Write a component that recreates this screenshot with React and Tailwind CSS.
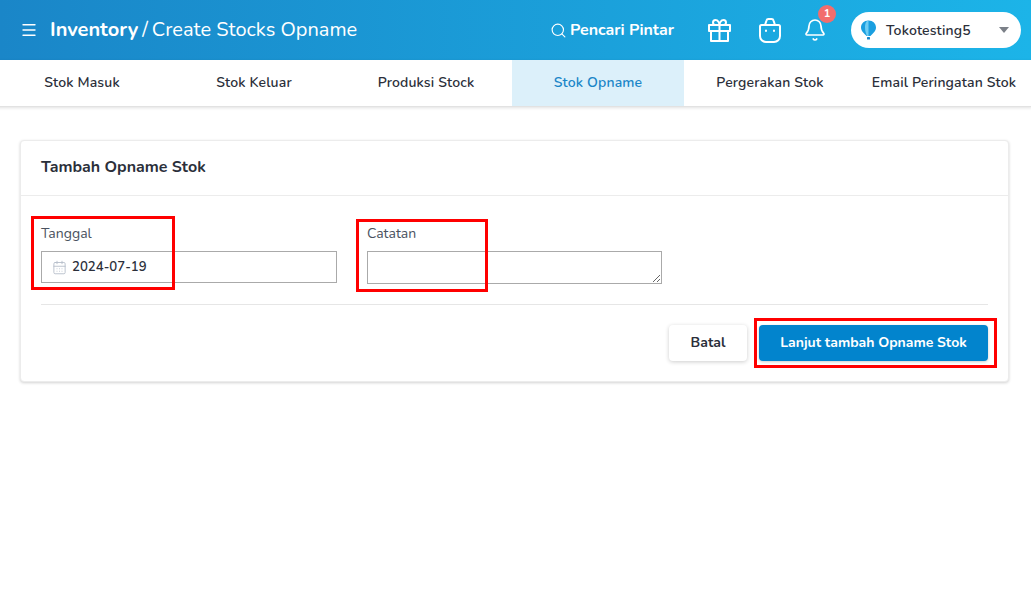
import React from 'react';
import { Menu, Search, Bell, CalendarDays } from 'lucide-react';

const tabs = ['Stok Masuk', 'Stok Keluar', 'Produksi Stock', 'Stok Opname', 'Pergerakan Stok'];

function GiftIcon() {
  return (
    <svg width="23" height="23" viewBox="0 0 23 23" fill="none" stroke="white" strokeWidth="2" strokeLinecap="round" strokeLinejoin="round">
      <rect x="1" y="6" width="21" height="6" />
      <path d="M3 12v10h17V12" />
      <path d="M11.500 6v16" />
      <path d="M11.500 6H7.500a2.500 2.500 0 0 1 0-5c2.500 0 4 3 4 5z" />
      <path d="M11.500 6h4a2.500 2.500 0 0 0 0-5c-2.500 0-4 3-4 5z" />
    </svg>
  );
}

function Bag() {
  return (
    <svg width="24" height="26" viewBox="0 0 24 26" fill="none" stroke="white" strokeWidth="2" strokeLinecap="round" strokeLinejoin="round">
      <path d="M3.500 8h17a1.500 1.500 0 0 1 1.500 1.500V19a6 6 0 0 1-6 6H8a6 6 0 0 1-6-6V9.500A1.500 1.500 0 0 1 3.500 8z" />
      <path d="M7 8l1.500-4.500A2 2 0 0 1 10.400 2h3.200a2 2 0 0 1 1.900 1.500L17 8" />
      <path d="M8 13.500v.5M16 13.500v.5" />
    </svg>
  );
}

function Balloon() {
  return (
    <svg width="17" height="20" viewBox="0 0 17 20">
      <path d="M8.500 0.500C4 0.500 1 3.800 1 7.500c0 3.800 4 6.800 5.500 8.500h4c1.500-1.700 5.500-4.700 5.500-8.500 0-3.700-3-7-7.500-7z" fill="#1a9fe0" />
      <path d="M8.500 0.500C6.200 0.500 5 3.800 5 7.500c0 3.800 1.300 6.800 2 8.500h1.500z" fill="#6fcdf3" />
      <rect x="7" y="17" width="3" height="2.500" rx="0.500" fill="#1a86c8" />
    </svg>
  );
}

export default function App() {
  return (
    <div className="relative min-h-[604px] overflow-hidden bg-white font-['Nunito','Lato','Noto_Sans',sans-serif] text-[#2b2f3a]">
      <header className="flex h-[60px] items-center bg-gradient-to-r from-[#1a86c8] to-[#1cb4e8] pl-[20px] pr-[10px] text-white">
        <Menu size={18} strokeWidth={1.8} />
        <div className="ml-[12px] flex items-center text-[20px]">
          <span className="font-bold">Inventory</span>
          <span className="mx-[4px]">/</span>
          <span>Create Stocks Opname</span>
        </div>
        <div className="ml-auto flex items-center">
          <Search size={17} strokeWidth={1.6} />
          <span className="ml-[3px] text-[16px] font-bold">Pencari Pintar</span>
          <div className="ml-[34px] flex"><GiftIcon /></div>
          <div className="ml-[27px] flex"><Bag /></div>
          <div className="relative ml-[21px] flex">
            <Bell size={24} strokeWidth={1.7} />
            <span className="absolute -right-[9px] -top-[13px] flex h-[18px] w-[18px] items-center justify-center rounded-full bg-[#f26d6d] text-[11px] font-bold">1</span>
          </div>
          <div className="ml-[24px] flex h-[36px] w-[170px] items-center rounded-full bg-white pl-[9px] pr-[12px] text-[#2b2f3a]">
            <Balloon />
            <span className="ml-[9px] text-[14px] font-semibold tracking-[0.15px]">Tokotesting5</span>
            <span className="ml-auto h-0 w-0 border-x-[5px] border-t-[6px] border-x-transparent border-t-[#7b8088]" />
          </div>
        </div>
      </header>

      <nav className="-ml-[4px] flex h-[47px] w-[1036px] border-b border-[#e2e2e2] bg-white shadow-[0_1px_3px_rgba(0,0,0,0.12)]">
        {tabs.map((t) => (
          <div
            key={t}
            className={t === 'Stok Opname'
              ? 'flex w-[172px] shrink-0 items-center justify-center whitespace-nowrap bg-[#dcf0fa] pb-[1px] text-[14px] font-semibold tracking-[0.15px] text-[#1a86c8]'
              : 'flex w-[172px] shrink-0 items-center justify-center whitespace-nowrap pb-[1px] text-[14px] font-semibold tracking-[0.15px]'}
          >
            {t}
          </div>
        ))}
        <div className="flex flex-1 items-center justify-center whitespace-nowrap pb-[1px] text-[14px] font-semibold tracking-[0.15px]">Email Peringatan Stok</div>
      </nav>

      <main className="pl-[20px] pr-[22px] pt-[33px]">
        <section className="h-[242px] rounded-[4px] border border-[#ececec] bg-white shadow-[0_1px_3px_rgba(0,0,0,0.18)]">
          <div className="flex h-[55px] items-center border-b border-[#ececec] px-[20px] pb-[2px]">
            <h2 className="text-[16px] font-bold">Tambah Opname Stok</h2>
          </div>
          <div className="px-[20px]">
            <div className="flex gap-[30px] pt-[28px]">
              <div className="w-[296px]">
                <label className="block text-[14px] leading-[19px] text-[#4a5260]">Tanggal</label>
                <div className="mt-[8px] flex h-[32px] items-center border border-[#aaaaaa] pl-[10px] pt-[1px]">
                  <CalendarDays size={15} strokeWidth={1.4} className="text-[#b4bcc8]" />
                  <span className="ml-[5px] text-[13.200px] font-semibold">2024-07-19</span>
                </div>
              </div>
              <div className="w-[295px]">
                <label className="block text-[14px] leading-[19px] text-[#4a5260]">Catatan</label>
                <textarea className="mt-[8px] block h-[33px] w-full border border-[#aaaaaa] outline-none" />
              </div>
            </div>
            <div className="mt-[20px] flex justify-end gap-[12px] border-t border-[#e6e6e6] pt-[20px]">
              <button className="h-[36px] w-[78px] rounded-[4px] bg-white pb-[2px] text-[14px] font-bold shadow-[0_1px_4px_rgba(0,0,0,0.2)]">Batal</button>
              <button className="h-[36px] w-[229px] rounded-[4px] bg-[#0284cd] pb-[2px] text-[14px] font-bold text-white shadow-[0_1px_3px_rgba(0,0,0,0.2)]">Lanjut tambah Opname Stok</button>
            </div>
          </div>
        </section>
      </main>

      {/* kotak merah anotasi */}
      <div className="absolute left-[31px] top-[216px] h-[74px] w-[144px] border-[3px] border-[#ff0000]" />
      <div className="absolute left-[356px] top-[219px] h-[73px] w-[132px] border-[3px] border-[#ff0000]" />
      <div className="absolute left-[754px] top-[318px] h-[50px] w-[243px] border-[3px] border-[#ff0000]" />
    </div>
  );
}
